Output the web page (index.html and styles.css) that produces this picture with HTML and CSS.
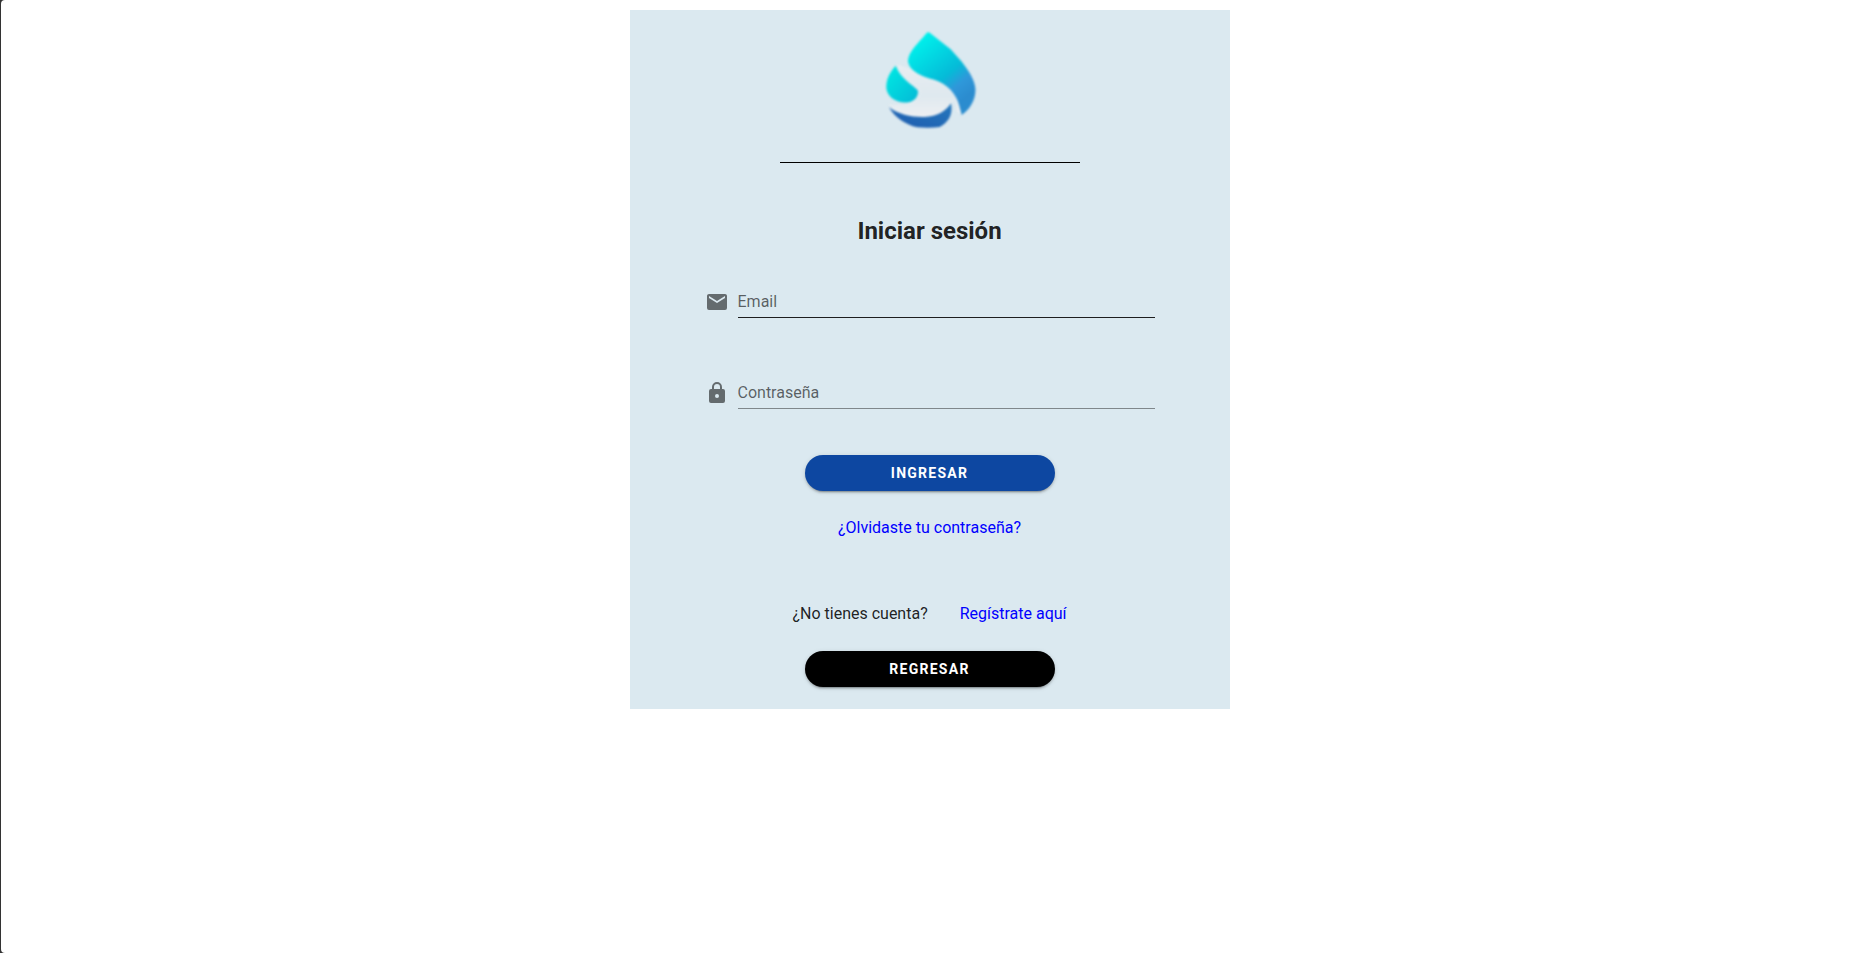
FILE: index.html
```html
<!DOCTYPE html>
<html lang="es">
<head>
<meta charset="utf-8">
<meta name="viewport" content="width=device-width, initial-scale=1">
<title>Iniciar sesión</title>
<link rel="stylesheet" href="styles.css">
</head>
<body>
<main class="page">
  <form class="card">
    <svg class="logo" viewBox="0 0 360 360" aria-hidden="true">
      <defs>
        <linearGradient id="drop" gradientUnits="userSpaceOnUse" x1="150" y1="60" x2="290" y2="230">
          <stop offset="0" stop-color="#00efeb"/>
          <stop offset=".6" stop-color="#05bbd8"/>
          <stop offset=".8" stop-color="#2f98da"/>
          <stop offset="1" stop-color="#2b8ccf"/>
        </linearGradient>
        <linearGradient id="leaf" x1="0" y1="0" x2="1" y2="1">
          <stop offset="0" stop-color="#00ebe4"/>
          <stop offset="1" stop-color="#04b9d6"/>
        </linearGradient>
        <linearGradient id="wave" x1="0" y1="1" x2="1" y2="0">
          <stop offset="0" stop-color="#1e5bae"/>
          <stop offset="1" stop-color="#2678bd"/>
        </linearGradient>
        <linearGradient id="band" x1="0" y1="0" x2="0" y2="1">
          <stop offset="0" stop-color="#e8edf1"/>
          <stop offset=".6" stop-color="#dfe9ef"/>
          <stop offset="1" stop-color="#eef0f3"/>
        </linearGradient>
      </defs>
      <g class="logo-art">
        <path fill="url(#band)" d="M82 133C96 138 108 142 122 148C145 168 172 178 200 183C238 198 260 224 269 256L275 284L260 272L256 242L243 250C226 278 198 292 162 291C115 292 80 278 54 252C75 255 100 254 118 248C137 243 150 228 148 212C120 190 92 170 82 133Z"/>
        <path fill="url(#drop)" d="M180 39Q174 34 168 41C143 72 114 95 114 124C119 156 160 171 195 180C231 191 259 222 268 257L275 285C301 268 319 235 316 204C313 176 294 150 274 124L242 88Z"/>
        <path fill="url(#leaf)" d="M77 137C57 159 48 180 49 205C53 235 84 251 115 247C136 244 147 225 143 211C129 194 92 177 77 137Z"/>
        <path fill="url(#wave)" d="M57 262C86 284 125 292 164 291C202 289 226 275 243 250C249 281 238 306 209 321Q180 325 142 322C107 315 75 293 57 262Z"/>
      </g>
    </svg>
    <hr class="divider">
    <h1 class="title">Iniciar sesión</h1>
    <div class="field">
      <label class="field-icon" for="email" aria-label="Email"><svg viewBox="0 0 24 24"><path d="M20 8l-8 5-8-5V6l8 5 8-5m0-2H4c-1.100 0-2 .9-2 2v12a2 2 0 0 0 2 2h16a2 2 0 0 0 2-2V6c0-1.110-.9-2-2-2z"/></svg></label>
      <input class="field-input field-input-active" id="email" type="email" placeholder="Email">
    </div>
    <div class="field field-password">
      <label class="field-icon" for="password" aria-label="Contraseña"><svg viewBox="0 0 24 24"><path d="M12 17a2 2 0 0 0 2-2 2 2 0 0 0-2-2 2 2 0 0 0-2 2 2 2 0 0 0 2 2m6-9a2 2 0 0 1 2 2v10a2 2 0 0 1-2 2H6a2 2 0 0 1-2-2V10a2 2 0 0 1 2-2h1V6a5 5 0 0 1 10 0v2h1m-6-5a3 3 0 0 0-3 3v2h6V6a3 3 0 0 0-3-3z"/></svg></label>
      <input class="field-input" id="password" type="password" placeholder="Contraseña">
    </div>
    <button class="btn btn-primary" type="submit">INGRESAR</button>
    <a class="link" href="#recuperar">¿Olvidaste tu contraseña?</a>
    <div class="signup">
      <span>¿No tienes cuenta?</span>
      <a class="link" href="#registro">Regístrate aquí</a>
    </div>
    <button class="btn btn-dark" type="button">REGRESAR</button>
  </form>
</main>
</body>
</html>
```
FILE: styles.css
```css
* {
  box-sizing: border-box;
}

html {
  background: #333;
}

body {
  margin: 0;
  font-family: Roboto, sans-serif;
  font-size: 16px;
  line-height: 24px;
  color: rgba(0, 0, 0, 0.87);
}

.page {
  min-height: 100vh;
  margin-left: 1px;
  padding: 10px;
  background: #fff;
  border-radius: 4px 0 0 4px;
}

.card {
  display: flex;
  flex-direction: column;
  align-items: center;
  max-width: 600px;
  margin: 0 auto;
  padding: 10px 0 22px;
  background: #dbe9f0;
}

.logo {
  width: 120px;
  height: 120px;
}

.logo-art {
  filter: blur(3px);
}

.divider {
  width: 50%;
  height: 1px;
  margin: 22px 0 52px;
  border: 0;
  background: #000;
}

.title {
  margin: 0 0 38px;
  font-size: 24px;
  line-height: 32px;
  font-weight: 700;
}

.field {
  display: flex;
  align-items: center;
  gap: 9px;
  width: 75%;
}

.field-password {
  margin: 58px 0 46px;
}

.field-icon {
  width: 24px;
  height: 24px;
}

.field-icon svg {
  display: block;
  fill: rgba(0, 0, 0, 0.54);
}

.field-input {
  flex: 1;
  min-width: 0;
  height: 33px;
  padding: 0;
  border: 0;
  border-bottom: 1px solid rgba(0, 0, 0, 0.42);
  border-radius: 0;
  outline: 0;
  background: transparent;
  font: inherit;
  color: inherit;
}

.field-input-active {
  border-bottom-color: rgba(0, 0, 0, 0.87);
}

.field-input::placeholder {
  color: rgba(0, 0, 0, 0.6);
  opacity: 1;
}

.btn {
  width: 250px;
  height: 36px;
  padding: 0 16px;
  border: 0;
  border-radius: 28px;
  font-family: inherit;
  font-size: 14px;
  font-weight: 700;
  letter-spacing: 0.09em;
  color: #fff;
  box-shadow: 0 3px 1px -2px rgba(0, 0, 0, 0.2), 0 2px 2px 0 rgba(0, 0, 0, 0.14), 0 1px 5px 0 rgba(0, 0, 0, 0.12);
}

.btn-primary {
  margin-bottom: 25px;
  background: #0d47a1;
}

.btn-dark {
  background: #000;
}

.link {
  color: #00f;
  text-decoration: none;
}

.signup {
  display: flex;
  gap: 32px;
  margin: 62px 0 25px;
}
```
